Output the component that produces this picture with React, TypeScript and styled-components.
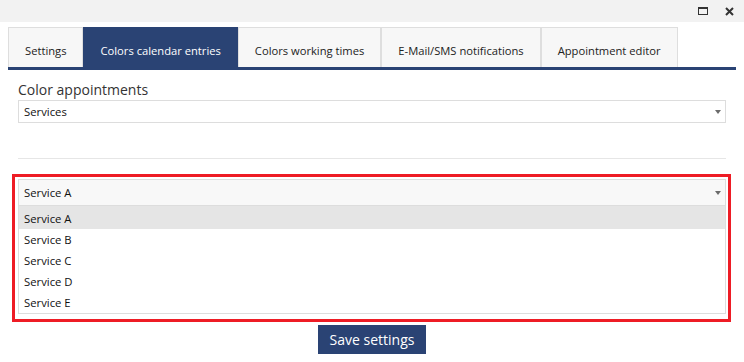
import { createGlobalStyle } from "styled-components";
import styled from "styled-components";

const NAVY = "#2a4374";

const GlobalStyle = createGlobalStyle`
  html, body {
    margin: 0;
    padding: 0;
    background: #ffffff;
  }
  body {
    font-family: "Open Sans", "Noto Sans", sans-serif;
    color: #222;
  }
  * {
    box-sizing: border-box;
  }
`;

const TitleBar = styled.div`
  height: 22px;
  background: #f2f2f2;
  display: flex;
  align-items: center;
  justify-content: flex-end;
  gap: 17px;
  padding-right: 10px;
`;

const MaximizeIcon = styled.span`
  width: 10px;
  height: 8px;
  border: 1px solid #333;
  border-top-width: 2px;
`;

const TabStrip = styled.div`
  display: flex;
  margin-top: 5px;
  padding: 0 8px;
`;

const Tab = styled.div<{ $active?: boolean }>`
  height: 40px;
  padding: 5px 16px 0;
  display: flex;
  align-items: center;
  font-size: 11.2px;
  white-space: nowrap;
  background: ${({ $active }) => ($active ? NAVY : "#f7f7f7")};
  color: ${({ $active }) => ($active ? "#ffffff" : "#222")};
  border: 1px solid ${({ $active }) => ($active ? NAVY : "#dedede")};
  border-bottom: none;
`;

const TabBar = styled.div`
  height: 3px;
  margin: 0 8px;
  background: ${NAVY};
`;

const Content = styled.div`
  padding: 0 18px;
`;

const Label = styled.div`
  margin-top: 11px;
  margin-bottom: 1px;
  font-size: 14px;
  line-height: 18px;
  color: #333;
`;

const SelectBox = styled.div<{ $open?: boolean }>`
  height: ${({ $open }) => ($open ? "27px" : "23px")};
  border: 1px solid #dddddd;
  background: ${({ $open }) => ($open ? "#f8f8f8" : "#ffffff")};
  display: flex;
  align-items: center;
  justify-content: space-between;
  padding: 0 4px 0 5px;
  font-size: 11.3px;
  color: #111;
`;

const Caret = styled.span`
  width: 0;
  height: 0;
  border-left: 3.5px solid transparent;
  border-right: 3.5px solid transparent;
  border-top: 4px solid #6b6b6b;
  margin-top: 1px;
`;

const Divider = styled.div`
  height: 1px;
  background: #e6e6e6;
  margin-top: 35px;
`;

const Highlight = styled.div`
  margin: 15px -5px 0 -6px;
  border: 3px solid #ee1c25;
  padding: 2px 2px 5px 3px;
`;

const OptionList = styled.div`
  border: 1px solid #dddddd;
  border-top: none;
`;

const Option = styled.div<{ $selected?: boolean }>`
  height: 21px;
  display: flex;
  align-items: center;
  padding-left: 5px;
  font-size: 11.3px;
  color: #111;
  background: ${({ $selected }) => ($selected ? "#e5e5e5" : "#ffffff")};

  &:first-child {
    height: 23px;
    padding-top: 2px;
  }
`;

const Footer = styled.div`
  display: flex;
  justify-content: center;
  margin-top: 3px;
`;

const SaveButton = styled.button`
  height: 29px;
  padding: 0 12px;
  border: none;
  background: ${NAVY};
  color: #ffffff;
  font-family: "Open Sans", "Noto Sans", sans-serif;
  font-size: 14px;
`;

const tabs = [
  "Settings",
  "Colors calendar entries",
  "Colors working times",
  "E-Mail/SMS notifications",
  "Appointment editor",
];

const services = ["Service A", "Service B", "Service C", "Service D", "Service E"];

export default function App() {
  return (
    <>
      <GlobalStyle />
      <TitleBar>
        <MaximizeIcon />
        <svg width="9" height="9" viewBox="0 0 9 9">
          <path d="M1 1 L8 8 M8 1 L1 8" stroke="#333" strokeWidth="2" />
        </svg>
      </TitleBar>

      <TabStrip>
        {tabs.map((t, i) => (
          <Tab key={t} $active={i === 1}>
            {t}
          </Tab>
        ))}
      </TabStrip>
      <TabBar />

      <Content>
        <Label>Color appointments</Label>
        <SelectBox>
          <span>Services</span>
          <Caret />
        </SelectBox>

        <Divider />

        <Highlight>
          <SelectBox $open>
            <span>Service A</span>
            <Caret />
          </SelectBox>
          <OptionList>
            {services.map((s, i) => (
              <Option key={s} $selected={i === 0}>
                {s}
              </Option>
            ))}
          </OptionList>
        </Highlight>
      </Content>

      <Footer>
        <SaveButton>Save settings</SaveButton>
      </Footer>
    </>
  );
}
